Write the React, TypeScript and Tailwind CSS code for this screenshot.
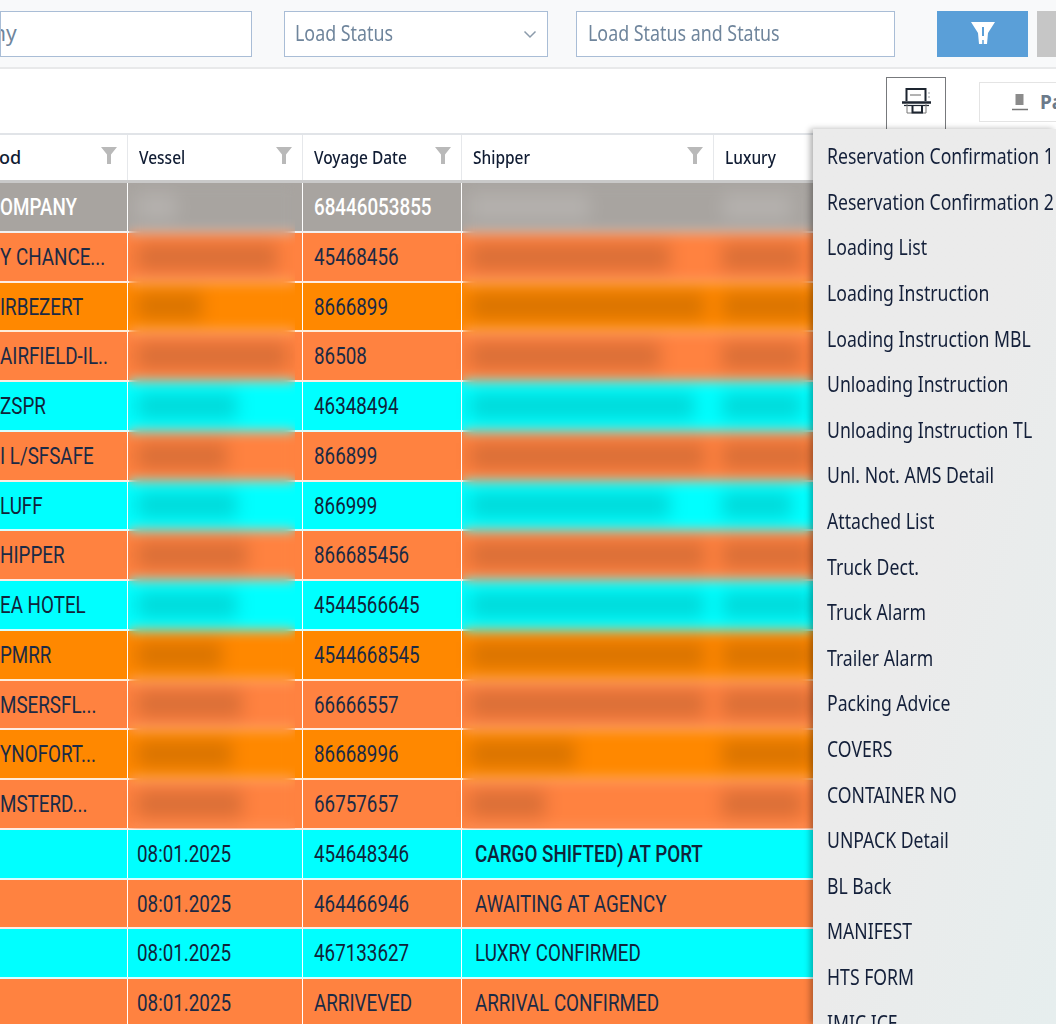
import React from 'react';

type Tone = 'gray' | 'orange' | 'dark' | 'cyan';

interface LoadRow {
    id: number;
    tone: Tone;
    pod: string;
    vessel?: string;
    voyage: string;
    shipper?: string;
    bold?: boolean;
    vesselPill?: string;
    shipperPill?: string;
    luxuryPill?: string;
}

const toneClass: Record<Tone, string> = {
    gray: 'bg-[#a8a4a0] text-white font-medium',
    orange: 'bg-[#ff8240] text-[#1b2a45]',
    dark: 'bg-[#ff8800] text-[#1b2a45]',
    cyan: 'bg-[#00ffff] text-[#10233a]',
};

const rows: LoadRow[] = [
    { id: 1, tone: 'gray', pod: 'OMPANY', voyage: '68446053855', vesselPill: 'w-[40px]', shipperPill: 'w-[120px]', luxuryPill: 'w-[70px]' },
    { id: 2, tone: 'orange', pod: 'Y CHANCE...', voyage: '45468456', vesselPill: 'w-[140px]', shipperPill: 'w-[200px]', luxuryPill: 'w-[80px]' },
    { id: 3, tone: 'dark', pod: 'IRBEZERT', voyage: '8666899', vesselPill: 'w-[65px]', shipperPill: 'w-[235px]', luxuryPill: 'w-[90px]' },
    { id: 4, tone: 'orange', pod: 'AIRFIELD-IL..', voyage: '86508', vesselPill: 'w-[150px]', shipperPill: 'w-[190px]', luxuryPill: 'w-[80px]' },
    { id: 5, tone: 'cyan', pod: 'ZSPR', voyage: '46348494', vesselPill: 'w-[100px]', shipperPill: 'w-[225px]', luxuryPill: 'w-[80px]' },
    { id: 6, tone: 'orange', pod: 'I L/SFSAFE', voyage: '866899', vesselPill: 'w-[90px]', shipperPill: 'w-[235px]', luxuryPill: 'w-[90px]' },
    { id: 7, tone: 'cyan', pod: 'LUFF', voyage: '866999', vesselPill: 'w-[100px]', shipperPill: 'w-[200px]', luxuryPill: 'w-[70px]' },
    { id: 8, tone: 'orange', pod: 'HIPPER', voyage: '866685456', vesselPill: 'w-[110px]', shipperPill: 'w-[235px]', luxuryPill: 'w-[90px]' },
    { id: 9, tone: 'cyan', pod: 'EA HOTEL', voyage: '4544566645', vesselPill: 'w-[100px]', shipperPill: 'w-[235px]', luxuryPill: 'w-[90px]' },
    { id: 10, tone: 'dark', pod: 'PMRR', voyage: '4544668545', vesselPill: 'w-[85px]', shipperPill: 'w-[235px]', luxuryPill: 'w-[90px]' },
    { id: 11, tone: 'orange', pod: 'MSERSFL...', voyage: '66666557', vesselPill: 'w-[105px]', shipperPill: 'w-[235px]', luxuryPill: 'w-[90px]' },
    { id: 12, tone: 'dark', pod: 'YNOFORT...', voyage: '86668996', vesselPill: 'w-[95px]', shipperPill: 'w-[105px]', luxuryPill: 'w-[90px]' },
    { id: 13, tone: 'orange', pod: 'MSTERD...', voyage: '66757657', vesselPill: 'w-[105px]', shipperPill: 'w-[75px]', luxuryPill: 'w-[80px]' },
    { id: 14, tone: 'cyan', pod: '', vessel: '08:01.2025', voyage: '454648346', shipper: 'CARGO SHIFTED) AT PORT', bold: true },
    { id: 15, tone: 'orange', pod: '', vessel: '08:01.2025', voyage: '464466946', shipper: 'AWAITING AT AGENCY' },
    { id: 16, tone: 'cyan', pod: '', vessel: '08:01.2025', voyage: '467133627', shipper: 'LUXRY CONFIRMED' },
    { id: 17, tone: 'orange', pod: '', vessel: '08:01.2025', voyage: 'ARRIVEVED', shipper: 'ARRIVAL CONFIRMED' },
];

const menuItems = [
    'Reservation Confirmation 1',
    'Reservation Confirmation 2',
    'Loading List',
    'Loading Instruction',
    'Loading Instruction MBL',
    'Unloading Instruction',
    'Unloading Instruction TL',
    'Unl. Not. AMS Detail',
    'Attached List',
    'Truck Dect.',
    'Truck Alarm',
    'Trailer Alarm',
    'Packing Advice',
    'COVERS',
    'CONTAINER NO',
    'UNPACK Detail',
    'BL Back',
    'MANIFEST',
    'HTS FORM',
    'IMIC ICE',
];

const FunnelIcon = () => (
    <svg width="16" height="18" viewBox="0 0 16 18" className="absolute right-[10px] top-[12px]">
        <path d="M0 0H16L10 7.5V17H6V7.5Z" fill="#b9b9b9" />
    </svg>
);

const cellText = "inline-block origin-left translate-y-[1px] scale-x-[.8] whitespace-nowrap font-['Roboto',sans-serif] text-[23.5px] leading-none";
const fieldText = 'inline-block origin-left scale-x-[.85] whitespace-nowrap text-[21px] text-[#6f859c]';

const HeaderCell = ({ label, filter, width }: { label: string; filter?: boolean; width: string }) => (
    <div className={`relative flex h-full items-center border-r border-[#e6e8eb] pl-[11px] ${width}`}>
        <span className="inline-block origin-left scale-x-[.86] whitespace-nowrap text-[18px] font-medium text-[#101c33]">{label}</span>
        {filter && <FunnelIcon />}
    </div>
);

const TableRow = ({ row }: { row: LoadRow }) => {
    const pillTone = row.tone === 'gray' ? 'bg-white/15' : 'bg-black/15';
    const pill = `h-[26px] blur-[7px] ${pillTone}`;
    return (
        <div className={`grid h-[49.75px] grid-cols-[128px_175px_159px_252px_1fr] border-b-2 border-white/85 ${toneClass[row.tone]}`}>
            <div className="flex items-center overflow-hidden border-r border-white">
                <span className={cellText}>{row.pod}</span>
            </div>
            <div className="flex items-center border-r border-white pl-[9px]">
                {row.vessel ? <span className={cellText}>{row.vessel}</span> : <div className={`${pill} ${row.vesselPill}`} />}
            </div>
            <div className="flex items-center border-r border-white pl-[11px]">
                <span className={cellText}>{row.voyage}</span>
            </div>
            <div className={`flex items-center ${row.shipper ? 'pl-[13px]' : 'pl-[8px]'}`}>
                {row.shipper ? (
                    <span className={`${cellText} ${row.bold ? 'font-medium' : ''}`}>{row.shipper}</span>
                ) : (
                    <div className={`${pill} ${row.shipperPill}`} />
                )}
            </div>
            <div className="flex items-center pl-[8px]">
                {row.luxuryPill && <div className={`${pill} ${row.luxuryPill}`} />}
            </div>
        </div>
    );
};

export default function App() {
    return (
        <div className="relative h-[1024px] w-[1056px] overflow-hidden bg-white font-['Noto_Sans',sans-serif]">
            {/* filter bar */}
            <div className="flex h-[69px] items-start border-b-2 border-[#e8e9ea] bg-[#f8f9fa] pt-[11px]">
                <div className="flex h-[46px] w-[252px] items-center overflow-hidden border border-[#a9bdd6] bg-white">
                    <span className="-ml-[8px] text-[21px] text-[#6f859c]">ny</span>
                </div>
                <div className="ml-[32px] flex h-[46px] w-[264px] items-center justify-between border border-[#a9bdd6] bg-white pl-[10px] pr-[10px]">
                    <span className={fieldText}>Load Status</span>
                    <svg width="14" height="9" viewBox="0 0 14 9" fill="none" stroke="#8b9bab" strokeWidth="1.5">
                        <path d="M1.5 1.5L7 7L12.5 1.5" />
                    </svg>
                </div>
                <div className="ml-[28px] flex h-[46px] w-[319px] items-center border border-[#a9bdd6] bg-white pl-[11px]">
                    <span className={fieldText}>Load Status and Status</span>
                </div>
                <div className="ml-[42px] flex h-[46px] w-[91px] items-start justify-center bg-[#5a9fd8] pt-[10px]">
                    <svg width="24" height="24" viewBox="0 0 24 24">
                        <path d="M0 1H24L17 12L16 23H8L7 12Z" fill="white" />
                        <path d="M12 6V15" stroke="#5a9fd8" strokeWidth="2" />
                        <path d="M12 19V23" stroke="#5a9fd8" strokeWidth="1.5" />
                    </svg>
                </div>
                <div className="ml-[9px] h-[46px] w-[19px] bg-[#c6c6c6]" />
            </div>

            {/* toolbar */}
            <div className="flex h-[64px] items-start bg-white pl-[886px] pt-[8px]">
                <div className="flex h-[56px] w-[60px] items-start justify-center border border-b-0 border-[#77797c] pt-[10px]">
                    <svg width="31" height="26" viewBox="0 0 31 26" fill="none" stroke="#1d2530">
                        <path d="M5.5 13V1H24.5V13" strokeWidth="2" />
                        <path d="M9 7H20" strokeWidth="1" stroke="#666" />
                        <path d="M1 14.5H30" strokeWidth="2.5" />
                        <path d="M3 17.5H28" strokeWidth="1.2" />
                        <path d="M6 15V25H25V15" strokeWidth="1" stroke="#777" />
                        <path d="M11.5 17V24.5H21V17" strokeWidth="2" />
                        <path d="M28 4V12" strokeWidth="1" stroke="#9aa0a6" strokeDasharray="2 2" />
                    </svg>
                </div>
                <div className="ml-[33px] mt-[5px] flex h-[40px] w-[77px] items-center border border-r-0 border-[#e4e4e4] pl-[32px]">
                    <svg width="16" height="18" viewBox="0 0 16 18" className="shrink-0">
                        <rect x="3.5" y="1" width="8" height="11" fill="#8b8b8b" />
                        <path d="M0 16.5H16" stroke="#777" strokeWidth="1.5" />
                    </svg>
                    <span className="ml-[12px] text-[19px] font-bold text-[#6b7a8a]">Pa</span>
                </div>
            </div>

            {/* table */}
            <div className="relative">
                <div className="flex h-[50px] border-b-[3px] border-t-2 border-b-[#c9c9c9] border-t-[#e1e4e8] bg-white">
                    <HeaderCell label="" filter width="w-[128px]" />
                    <HeaderCell label="Vessel" filter width="w-[175px]" />
                    <HeaderCell label="Voyage Date" filter width="w-[159px]" />
                    <HeaderCell label="Shipper" filter width="w-[252px]" />
                    <HeaderCell label="Luxury" width="w-[100px]" />
                </div>
                <span className="absolute -left-[1px] top-[15px] text-[18px] font-medium leading-none text-[#101c33]">od</span>
                {rows.map((row) => (
                    <TableRow key={row.id} row={row} />
                ))}
                {/* blurred out columns */}
                <div className="absolute left-[129px] top-[50px] h-[646px] w-[166px] backdrop-blur-[6px]" />
                <div className="absolute left-[463px] top-[50px] h-[646px] w-[350px] backdrop-blur-[6px]" />
            </div>

            {/* print menu */}
            <div className="absolute left-[813px] top-[129px] h-[895px] w-[243px] bg-linear-to-br from-[#ebebeb] via-[#ebebeb] to-[#e6eeee] pl-[14px] pt-[5px] shadow-[-3px_0_6px_rgba(0,0,0,0.3)]">
                {menuItems.map((item) => (
                    <div key={item} className="flex h-[45.6px] items-center">
                        <span className="inline-block origin-left scale-x-[.84] whitespace-nowrap text-[21px] leading-none text-[#14203a]">{item}</span>
                    </div>
                ))}
            </div>
        </div>
    );
}
